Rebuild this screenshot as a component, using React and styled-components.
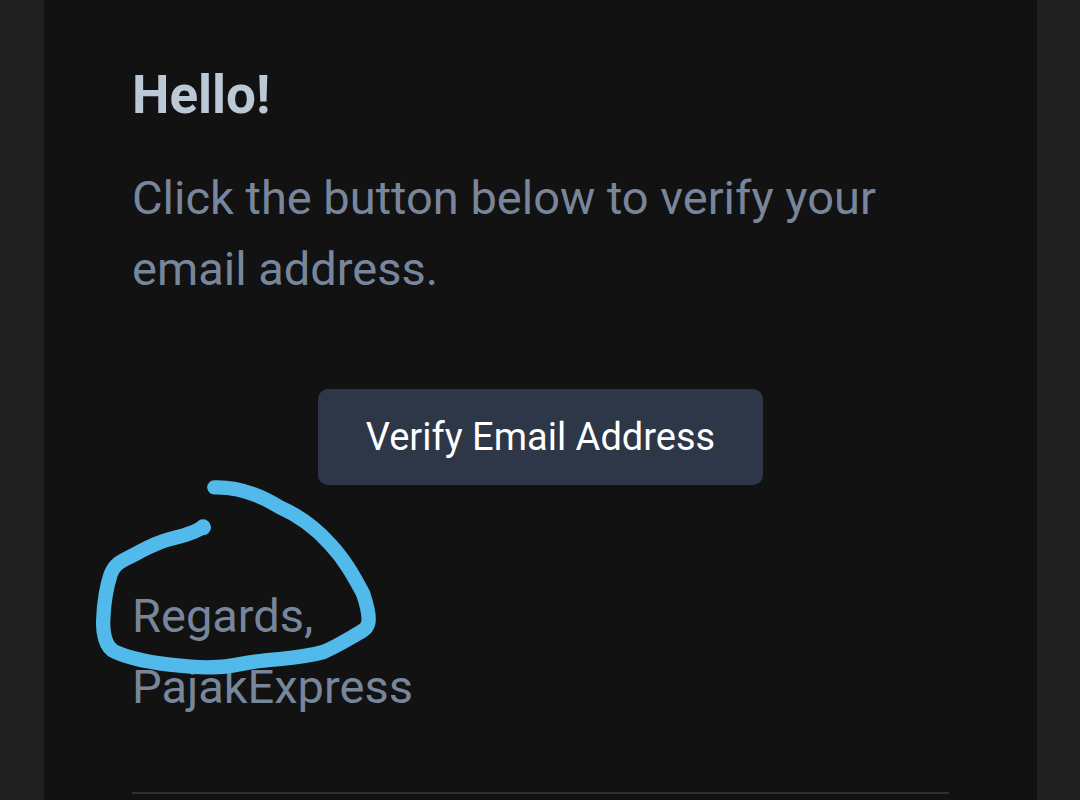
import React from "react"
import styled, { createGlobalStyle } from "styled-components"

const GlobalStyle = createGlobalStyle`
  body {
    margin: 0;
    background-color: #202020;
    font-family: Roboto, Arial, sans-serif;
  }
`

const Body = styled.div`
  min-height: 100vh;
  box-sizing: border-box;
  padding: 0 43px 0 44px;
  display: flex;
`

const Card = styled.main`
  width: 100%;
  box-sizing: border-box;
  padding: 63px 88px 0;
  background-color: #121212;
`

const Title = styled.h1`
  margin: 0 0 35px;
  color: #bbc8d5;
  font-size: 53px;
  font-weight: 700;
  line-height: 64px;
`

const Text = styled.p`
  margin: 0;
  color: #78869c;
  font-size: 47px;
  line-height: 71px;
`

const Action = styled.div`
  display: flex;
  justify-content: center;
  padding: 85px 0 95px;
`

const Button = styled.button`
  padding: 18px 48px;
  border: none;
  border-radius: 10px;
  background-color: #2d3748;
  color: #fff;
  font-family: inherit;
  font-size: 38px;
  line-height: 60px;
  cursor: pointer;
`

const Signature = styled.div`
  position: relative;
`

const Scribble = styled.svg`
  position: absolute;
  top: -110px;
  left: -52px;
  width: 310px;
  height: 250px;
  pointer-events: none;
`

const Divider = styled.hr`
  margin: 70px 0 0;
  border: none;
  border-top: 2px solid #303030;
`

const App = () => {
  return (
    <>
      <GlobalStyle />
      <Body>
        <Card>
          <Title>Hello!</Title>
          <Text>Click the button below to verify your email address.</Text>
          <Action>
            <Button type="button">Verify Email Address</Button>
          </Action>
          <Signature>
            <Text>
              Regards,
              <br />
              PajakExpress
            </Text>
            <Scribble viewBox="0 0 930 750" aria-hidden="true">
              <path
                d="M403 52 C480 50 545 78 598 111 C655 136 705 172 750 222
                  C795 270 822 320 849 370 C861 405 866 425 866 448
                  C866 470 856 478 835 490 C800 510 765 532 730 546
                  C665 565 600 565 540 573 C480 580 455 590 415 591
                  C370 594 340 592 300 587 C225 580 160 570 105 545
                  C75 532 67 485 70 445 C72 395 80 350 92 313
                  C102 288 112 279 145 263 C176 247 205 230 235 219
                  C265 206 290 203 315 195 C340 188 350 183 368 172"
                fill="none"
                stroke="#51baea"
                strokeWidth="43"
                strokeLinecap="round"
                strokeLinejoin="round"
              />
              <circle cx="369" cy="172" r="24" fill="#51baea" />
            </Scribble>
          </Signature>
          <Divider />
        </Card>
      </Body>
    </>
  )
}

export default App
